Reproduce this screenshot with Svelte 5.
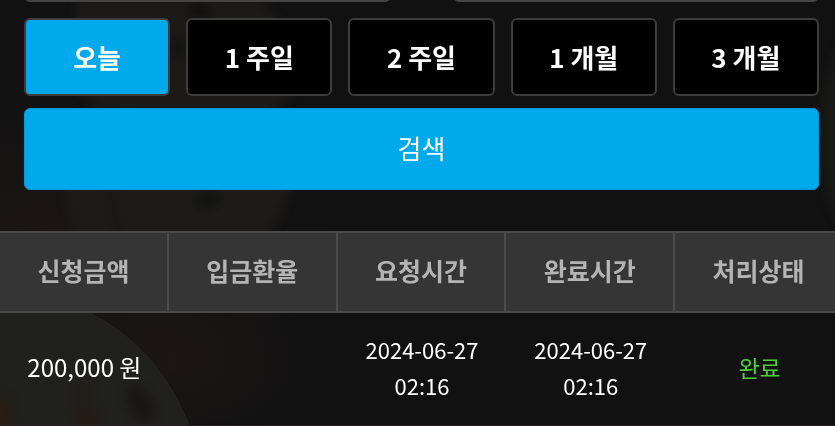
<script>
    const periods = ['오늘', '1 주일', '2 주일', '1 개월', '3 개월'];
    const columns = ['신청금액', '입금환율', '요청시간', '완료시간', '처리상태'];
    const rows = [
        {
            amount: '200,000 원',
            rate: '',
            requested: ['2024-06-27', '02:16'],
            completed: ['2024-06-27', '02:16'],
            status: '완료'
        }
    ];

    let selected = $state('오늘');
    let from = $state('');
    let to = $state('');
</script>

<main>
    <svg class="backdrop" viewBox="0 0 835 426" preserveAspectRatio="xMidYMid slice" aria-hidden="true">
        <defs>
            <filter id="soft" x="-20%" y="-20%" width="140%" height="140%" color-interpolation-filters="sRGB">
                <feGaussianBlur stdDeviation="4" />
            </filter>
            <radialGradient id="warm">
                <stop offset="0" stop-color="#1c1614" />
                <stop offset="1" stop-color="#1c1614" stop-opacity="0" />
            </radialGradient>
        </defs>
        <ellipse cx="60" cy="240" rx="270" ry="150" fill="url(#warm)" />
        <ellipse cx="170" cy="360" rx="150" ry="90" fill="url(#warm)" />
        <g filter="url(#soft)">
            <path d="M78-10H252Q286 20 298 65Q300 98 270 112H98Q76 90 72 55Z" fill="#1b1a17" />
            <path d="M64 180Q60 120 150 104H270Q300 135 290 190Q280 225 258 245H80Q68 220 64 180Z" fill="#1c1b18" />
            <path d="M108 180L120 240" stroke="#191715" stroke-width="8" />
            <ellipse cx="199" cy="11" rx="13" ry="9" fill="#131212" />
            <ellipse cx="178" cy="48" rx="10" ry="12" fill="#141413" />
            <ellipse cx="208" cy="200" rx="14" ry="9" fill="#121314" transform="rotate(-20 208 200)" />
            <ellipse cx="882" cy="135" rx="62" ry="122" fill="#191916" />
        </g>
        <path d="M0 310H84Q159 345 191 430H0Z" fill="#20201c" />
        <path d="M84 310Q159 345 191 430" fill="none" stroke="#26241f" />
        <g filter="url(#soft)" fill="#1a1614">
            <ellipse cx="141" cy="404" rx="11" ry="20" transform="rotate(-28 141 404)" />
            <ellipse cx="86" cy="418" rx="12" ry="13" fill="#251b14" />
            <ellipse cx="84" cy="392" rx="6" ry="9" fill="#221c16" />
            <ellipse cx="0" cy="415" rx="12" ry="20" fill="#281c13" />
        </g>
    </svg>

    <div class="page">
        <form onsubmit={(e) => e.preventDefault()}>
            <div class="dates">
                <input type="text" aria-label="시작일" bind:value={from} />
                <input type="text" aria-label="종료일" bind:value={to} />
            </div>
            <div class="periods">
                {#each periods as period}
                    <button
                        type="button"
                        class="period"
                        class:active={selected === period}
                        aria-pressed={selected === period}
                        onclick={() => (selected = period)}
                    >{period}</button>
                {/each}
            </div>
            <button type="submit" class="search">검색</button>
        </form>

        <table>
            <thead>
                <tr>
                    {#each columns as column}
                        <th scope="col">{column}</th>
                    {/each}
                </tr>
            </thead>
            <tbody>
                {#each rows as row}
                    <tr>
                        <td class="amount">{row.amount}</td>
                        <td>{row.rate}</td>
                        <td class="time">{row.requested[0]}<br />{row.requested[1]}</td>
                        <td class="time">{row.completed[0]}<br />{row.completed[1]}</td>
                        <td class="done">{row.status}</td>
                    </tr>
                {/each}
            </tbody>
        </table>
    </div>
</main>

<style>
    :global(body) {
        margin: 0;
        background: #111112;
    }

    main {
        position: relative;
        overflow: hidden;
        color: #fff;
        font-family: "Noto Sans CJK KR", sans-serif;
    }

    .backdrop {
        position: absolute;
        top: 0;
        left: 0;
        width: 100%;
        height: 100%;
    }

    /* the list runs slightly past the right edge of the screen */
    .page {
        position: relative;
        width: calc(100% + 9px);
    }

    form {
        display: flex;
        flex-direction: column;
        padding: 0 25px 41px 24px;
    }

    .dates {
        display: grid;
        grid-template-columns: 1fr 1fr;
        gap: 62px;
        margin-top: -76px;
        margin-bottom: 16px;
    }

    input {
        box-sizing: border-box;
        min-width: 0;
        height: 78px;
        padding: 0 16px;
        border: 2px solid #444;
        border-radius: 6px;
        background: #000;
        color: #fff;
        font: inherit;
    }

    .periods {
        display: grid;
        grid-template-columns: repeat(5, 1fr);
        gap: 16px;
        margin-bottom: 12px;
    }

    button {
        padding: 0;
        border-radius: 6px;
        color: #fff;
        font-family: inherit;
        font-size: 26px;
        line-height: 38px;
        cursor: pointer;
    }

    .period {
        height: 78px;
        border: 2px solid #3c3c3c;
        background: #000;
        font-weight: 700;
    }

    .period.active {
        background: #00a8ec;
    }

    .search {
        height: 82px;
        padding-bottom: 2px;
        border: 1px solid #0796cf;
        background: #00a8ec;
    }

    table {
        width: 100%;
        table-layout: fixed;
        border-collapse: separate;
        border-spacing: 0;
    }

    th,
    td {
        box-sizing: border-box;
        padding: 0 0 4px;
        text-align: center;
    }

    th {
        height: 82px;
        border: 2px solid #4a4a4a;
        border-left: 0;
        background: #353535;
        color: #b4b4b4;
        font-size: 25px;
        font-weight: 700;
        line-height: 36px;
    }

    td {
        height: 113px;
        border-bottom: 1px solid #2a1f1f;
        font-size: 23px;
        line-height: 36px;
    }

    .amount {
        font-size: 24px;
    }

    .time {
        font-size: 22px;
    }

    .done {
        color: #4cd137;
    }
</style>
